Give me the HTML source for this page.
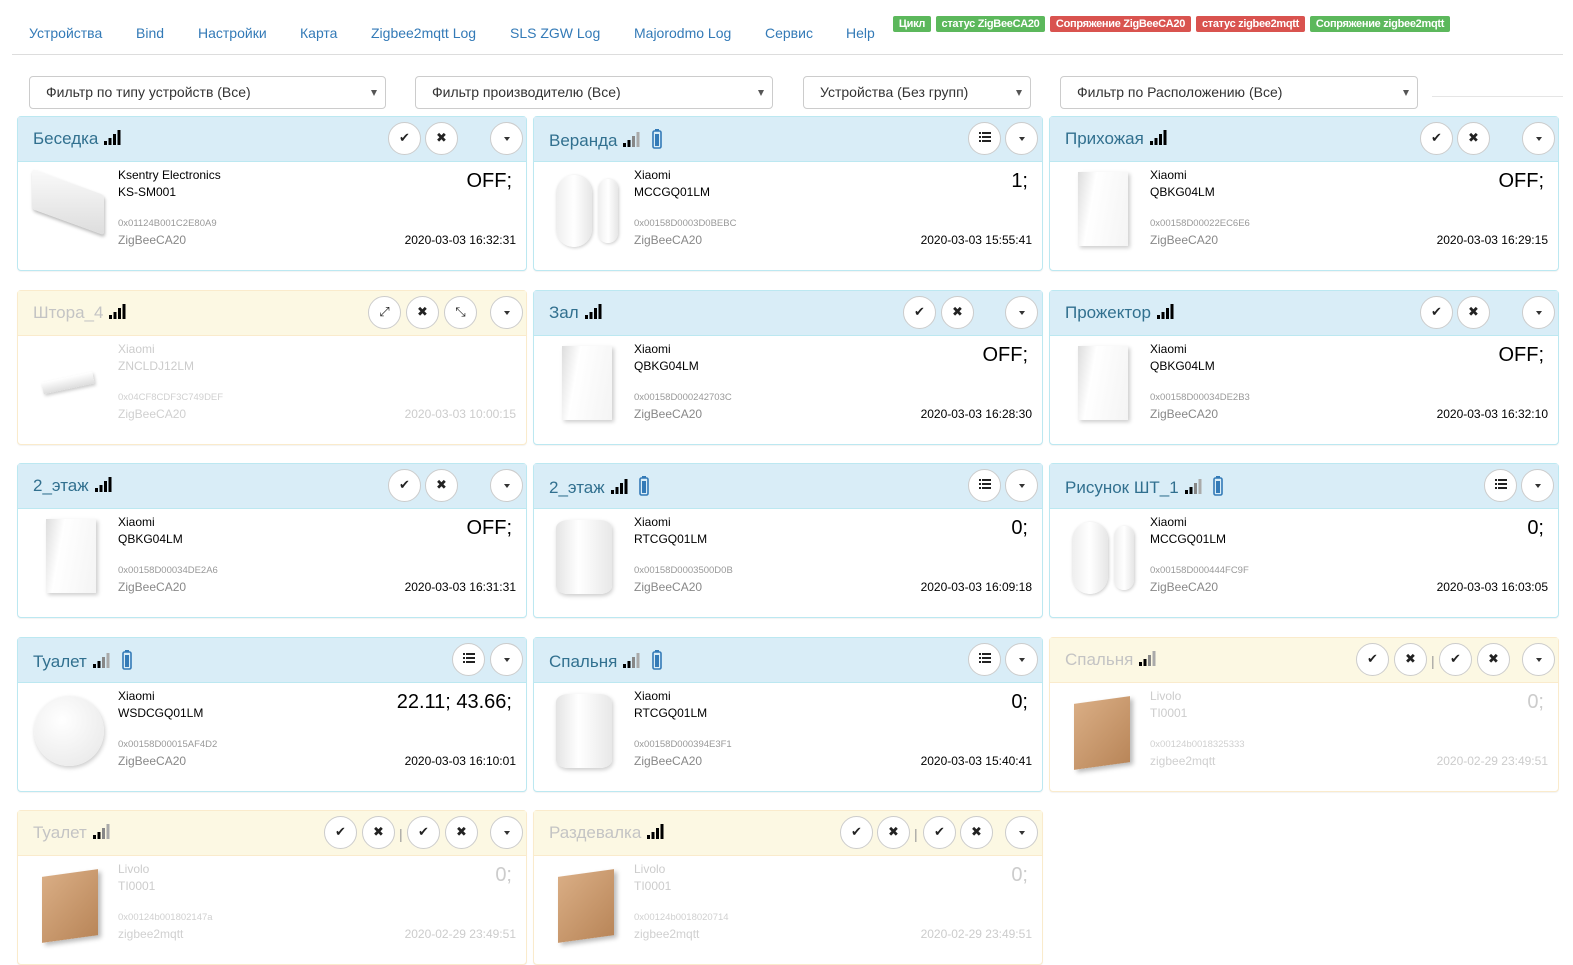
<!DOCTYPE html>
<html><head><meta charset="utf-8"><style>
*{box-sizing:border-box}
body{margin:0;width:1573px;height:957px;background:#fff;font-family:"Liberation Sans",sans-serif;position:relative;overflow:hidden;color:#333}
.nav a{position:absolute;top:25px;font-size:14px;color:#337ab7;text-decoration:none}
.hl{position:absolute;left:12px;top:54px;width:1551px;height:1px;background:#ddd}
.bd{position:absolute;top:16px;height:16px;font-size:11px;font-weight:bold;color:#fff;border-radius:2px;text-align:center;line-height:16px;letter-spacing:-0.3px;white-space:nowrap}
.g{background:#5cb85c}.r{background:#d9534f}
.sel{position:absolute;top:76px;height:33px;border:1px solid #ccc;border-radius:4px;font-size:14px;padding:7px 16px;color:#333}
.sel:after{content:"";position:absolute;right:8px;top:13px;border-left:3px solid transparent;border-right:3px solid transparent;border-top:6px solid #555}
.card{position:absolute;width:510px;height:155px;border:1px solid #bce8f1;border-radius:4px;background:#fff;box-shadow:0 1px 1px rgba(0,0,0,.05)}
.card.y{border-color:#faebcc}
.hd{height:45px;background:#d9edf7;border-bottom:1px solid #bce8f1;position:relative}
.y .hd{background:#fcf8e3;border-bottom-color:#faebcc}
.tt{position:absolute;left:15px;top:12px;font-size:17px;color:#31708f;white-space:nowrap}
.y .tt{color:#c4c4c4}
.tt svg{vertical-align:-1px;margin-left:6px}
.b{position:absolute;top:5px;width:33px;height:33px;border:1px solid #ccc;border-radius:50%;background:#fff;text-align:center;line-height:31px;font-size:13px;color:#222;font-family:"DejaVu Sans",sans-serif}
.b.c:after{content:"";position:absolute;left:13px;top:14px;border-left:3.5px solid transparent;border-right:3.5px solid transparent;border-top:4px solid #333}
.sep{position:absolute;top:15px;font-size:14px;color:#999}
.m{position:absolute;left:100px;font-size:12px;color:#000}
.y .m,.y .v,.y .dt{color:#ccc}
.ad{position:absolute;left:100px;top:101px;font-size:9.5px;color:#999}
.gw{position:absolute;left:100px;top:116px;font-size:12px;color:#888}
.y .ad,.y .gw{color:#d0d0d0}
.v{position:absolute;right:14px;top:53px;font-size:20px;color:#000}
.dt{position:absolute;right:10px;top:116px;font-size:12px;color:#000}
.im{position:absolute}
</style></head><body>
<div class="nav">
<a style="left:29px">Устройства</a><a style="left:136px">Bind</a><a style="left:198px">Настройки</a><a style="left:300px">Карта</a><a style="left:371px">Zigbee2mqtt Log</a><a style="left:510px">SLS ZGW Log</a><a style="left:634px">Majorodmo Log</a><a style="left:765px">Сервис</a><a style="left:846px">Help</a>
</div>
<div class="bd g" style="left:893px;width:38px">Цикл</div>
<div class="bd g" style="left:936px;width:109px">статус ZigBeeCA20</div>
<div class="bd r" style="left:1050px;width:141px">Сопряжение ZigBeeCA20</div>
<div class="bd r" style="left:1196px;width:109px">статус zigbee2mqtt</div>
<div class="bd g" style="left:1310px;width:140px">Сопряжение zigbee2mqtt</div>
<div class="hl"></div>
<div class="sel" style="left:29px;width:357px">Фильтр по типу устройств (Все)</div>
<div class="sel" style="left:415px;width:358px">Фильтр производителю (Все)</div>
<div class="sel" style="left:803px;width:228px">Устройства (Без групп)</div>
<div class="sel" style="left:1060px;width:358px">Фильтр по Расположению (Все)</div>
<div style="position:absolute;left:1432px;top:96px;width:131px;height:1px;background:#e5e5e5"></div>

<svg width="0" height="0" style="position:absolute"><defs>
<symbol id="sig" viewBox="0 0 18 15"><rect x="0" y="11" width="3" height="4" fill="#000"/><rect x="4.5" y="8" width="3" height="7" fill="#000"/><rect x="9" y="4" width="3" height="11" fill="#000"/><rect x="13.5" y="0" width="3" height="15" fill="#000"/></symbol>
<symbol id="sig2" viewBox="0 0 18 15"><rect x="0" y="11" width="3" height="4" fill="#000"/><rect x="4.5" y="8" width="3" height="7" fill="#000"/><rect x="9" y="4" width="3" height="11" fill="#888"/><rect x="13.5" y="0" width="3" height="15" fill="#aaa"/></symbol>
<symbol id="bat" viewBox="0 0 10 20"><rect x="3" y="0" width="4" height="2" fill="#337ab7"/><rect x="1" y="2" width="8" height="17" rx="1.5" fill="none" stroke="#337ab7" stroke-width="1.6"/><rect x="3" y="5" width="4" height="12" fill="#337ab7"/></symbol>
<symbol id="lst" viewBox="0 0 12 12"><g fill="#222"><rect x="0" y="1" width="2" height="2"/><rect x="3" y="1" width="9" height="2"/><rect x="0" y="5" width="2" height="2"/><rect x="3" y="5" width="9" height="2"/><rect x="0" y="9" width="2" height="2"/><rect x="3" y="9" width="9" height="2"/></g></symbol>
</defs></svg>

<!-- Row 1 -->
<div class="card" style="left:17px;top:116px"><div class="hd"><div class="tt">Беседка<svg width="18" height="15"><use href="#sig"/></svg></div>
<div class="b" style="left:370px">✔</div><div class="b" style="left:407px">✖</div><div class="b c" style="left:472px"></div></div>
<div class="im" style="left:14px;top:65px;width:72px;height:40px;background:linear-gradient(160deg,#fafafa,#ddd);transform:skewY(20deg);border-radius:3px;box-shadow:1px 2px 3px #bbb"></div>
<div class="m" style="top:51px">Ksentry Electronics</div><div class="m" style="top:68px">KS-SM001</div><div class="ad">0x01124B001C2E80A9</div><div class="gw">ZigBeeCA20</div><div class="v">OFF;</div><div class="dt">2020-03-03 16:32:31</div></div>

<div class="card" style="left:533px;top:116px"><div class="hd"><div class="tt">Веранда<svg width="18" height="15"><use href="#sig2"/></svg> <svg width="10" height="20" style="vertical-align:-3px"><use href="#bat"/></svg></div>
<div class="b" style="left:434px"><svg width="12" height="12" style="vertical-align:-1px"><use href="#lst"/></svg></div><div class="b c" style="left:471px"></div></div>
<div class="im" style="left:22px;top:58px;width:36px;height:72px;background:linear-gradient(90deg,#eee,#fff,#e6e6e6);border-radius:18px;box-shadow:1px 1px 3px #ccc"></div><div class="im" style="left:64px;top:62px;width:20px;height:64px;background:linear-gradient(90deg,#eee,#fff,#e6e6e6);border-radius:10px;box-shadow:1px 1px 3px #ccc"></div>
<div class="m" style="top:51px">Xiaomi</div><div class="m" style="top:68px">MCCGQ01LM</div><div class="ad">0x00158D0003D0BEBC</div><div class="gw">ZigBeeCA20</div><div class="v">1;</div><div class="dt">2020-03-03 15:55:41</div></div>

<div class="card" style="left:1049px;top:116px"><div class="hd"><div class="tt">Прихожая<svg width="18" height="15"><use href="#sig"/></svg></div>
<div class="b" style="left:370px">✔</div><div class="b" style="left:407px">✖</div><div class="b c" style="left:472px"></div></div>
<div class="im" style="left:28px;top:55px;width:50px;height:74px;background:linear-gradient(100deg,#ddd,#fff 30%,#f4f4f4);box-shadow:2px 2px 4px #ccc"></div>
<div class="m" style="top:51px">Xiaomi</div><div class="m" style="top:68px">QBKG04LM</div><div class="ad">0x00158D00022EC6E6</div><div class="gw">ZigBeeCA20</div><div class="v">OFF;</div><div class="dt">2020-03-03 16:29:15</div></div>

<!-- Row 2 -->
<div class="card y" style="left:17px;top:290px"><div class="hd"><div class="tt">Штора_4<svg width="18" height="15"><use href="#sig"/></svg></div>
<div class="b" style="left:350px">⤢</div><div class="b" style="left:388px">✖</div><div class="b" style="left:426px">⤡</div><div class="b c" style="left:472px"></div></div>
<div class="im" style="left:24px;top:86px;width:52px;height:12px;background:linear-gradient(#fff,#ddd);transform:rotate(-12deg);box-shadow:1px 2px 3px #ccc"></div>
<div class="m" style="top:51px">Xiaomi</div><div class="m" style="top:68px">ZNCLDJ12LM</div><div class="ad">0x04CF8CDF3C749DEF</div><div class="gw">ZigBeeCA20</div><div class="dt">2020-03-03 10:00:15</div></div>

<div class="card" style="left:533px;top:290px"><div class="hd"><div class="tt">Зал<svg width="18" height="15"><use href="#sig"/></svg></div>
<div class="b" style="left:369px">✔</div><div class="b" style="left:407px">✖</div><div class="b c" style="left:471px"></div></div>
<div class="im" style="left:28px;top:55px;width:50px;height:74px;background:linear-gradient(100deg,#ddd,#fff 30%,#f4f4f4);box-shadow:2px 2px 4px #ccc"></div>
<div class="m" style="top:51px">Xiaomi</div><div class="m" style="top:68px">QBKG04LM</div><div class="ad">0x00158D000242703C</div><div class="gw">ZigBeeCA20</div><div class="v">OFF;</div><div class="dt">2020-03-03 16:28:30</div></div>

<div class="card" style="left:1049px;top:290px"><div class="hd"><div class="tt">Прожектор<svg width="18" height="15"><use href="#sig"/></svg></div>
<div class="b" style="left:370px">✔</div><div class="b" style="left:407px">✖</div><div class="b c" style="left:472px"></div></div>
<div class="im" style="left:28px;top:55px;width:50px;height:74px;background:linear-gradient(100deg,#ddd,#fff 30%,#f4f4f4);box-shadow:2px 2px 4px #ccc"></div>
<div class="m" style="top:51px">Xiaomi</div><div class="m" style="top:68px">QBKG04LM</div><div class="ad">0x00158D00034DE2B3</div><div class="gw">ZigBeeCA20</div><div class="v">OFF;</div><div class="dt">2020-03-03 16:32:10</div></div>

<!-- Row 3 -->
<div class="card" style="left:17px;top:463px"><div class="hd"><div class="tt">2_этаж<svg width="18" height="15"><use href="#sig"/></svg></div>
<div class="b" style="left:370px">✔</div><div class="b" style="left:407px">✖</div><div class="b c" style="left:472px"></div></div>
<div class="im" style="left:28px;top:55px;width:50px;height:74px;background:linear-gradient(100deg,#ddd,#fff 30%,#f4f4f4);box-shadow:2px 2px 4px #ccc"></div>
<div class="m" style="top:51px">Xiaomi</div><div class="m" style="top:68px">QBKG04LM</div><div class="ad">0x00158D00034DE2A6</div><div class="gw">ZigBeeCA20</div><div class="v">OFF;</div><div class="dt">2020-03-03 16:31:31</div></div>

<div class="card" style="left:533px;top:463px"><div class="hd"><div class="tt">2_этаж<svg width="18" height="15"><use href="#sig"/></svg> <svg width="10" height="20" style="vertical-align:-3px"><use href="#bat"/></svg></div>
<div class="b" style="left:434px"><svg width="12" height="12" style="vertical-align:-1px"><use href="#lst"/></svg></div><div class="b c" style="left:471px"></div></div>
<div class="im" style="left:22px;top:56px;width:56px;height:74px;background:linear-gradient(90deg,#e4e4e4,#fff 40%,#e8e8e8);border-radius:12px/8px;box-shadow:1px 2px 4px #ccc"></div>
<div class="m" style="top:51px">Xiaomi</div><div class="m" style="top:68px">RTCGQ01LM</div><div class="ad">0x00158D0003500D0B</div><div class="gw">ZigBeeCA20</div><div class="v">0;</div><div class="dt">2020-03-03 16:09:18</div></div>

<div class="card" style="left:1049px;top:463px"><div class="hd"><div class="tt">Рисунок ШТ_1<svg width="18" height="15"><use href="#sig2"/></svg> <svg width="10" height="20" style="vertical-align:-3px"><use href="#bat"/></svg></div>
<div class="b" style="left:434px"><svg width="12" height="12" style="vertical-align:-1px"><use href="#lst"/></svg></div><div class="b c" style="left:471px"></div></div>
<div class="im" style="left:22px;top:58px;width:36px;height:72px;background:linear-gradient(90deg,#eee,#fff,#e6e6e6);border-radius:18px;box-shadow:1px 1px 3px #ccc"></div><div class="im" style="left:64px;top:62px;width:20px;height:64px;background:linear-gradient(90deg,#eee,#fff,#e6e6e6);border-radius:10px;box-shadow:1px 1px 3px #ccc"></div>
<div class="m" style="top:51px">Xiaomi</div><div class="m" style="top:68px">MCCGQ01LM</div><div class="ad">0x00158D000444FC9F</div><div class="gw">ZigBeeCA20</div><div class="v">0;</div><div class="dt">2020-03-03 16:03:05</div></div>

<!-- Row 4 -->
<div class="card" style="left:17px;top:637px"><div class="hd"><div class="tt">Туалет<svg width="18" height="15"><use href="#sig2"/></svg> <svg width="10" height="20" style="vertical-align:-3px"><use href="#bat"/></svg></div>
<div class="b" style="left:434px"><svg width="12" height="12" style="vertical-align:-1px"><use href="#lst"/></svg></div><div class="b c" style="left:472px"></div></div>
<div class="im" style="left:16px;top:58px;width:70px;height:70px;background:radial-gradient(circle at 40% 35%,#fff,#e6e6e6);border-radius:50%;box-shadow:1px 2px 4px #ccc"></div>
<div class="m" style="top:51px">Xiaomi</div><div class="m" style="top:68px">WSDCGQ01LM</div><div class="ad">0x00158D00015AF4D2</div><div class="gw">ZigBeeCA20</div><div class="v">22.11; 43.66;</div><div class="dt">2020-03-03 16:10:01</div></div>

<div class="card" style="left:533px;top:637px"><div class="hd"><div class="tt">Спальня<svg width="18" height="15"><use href="#sig2"/></svg> <svg width="10" height="20" style="vertical-align:-3px"><use href="#bat"/></svg></div>
<div class="b" style="left:434px"><svg width="12" height="12" style="vertical-align:-1px"><use href="#lst"/></svg></div><div class="b c" style="left:471px"></div></div>
<div class="im" style="left:22px;top:56px;width:56px;height:74px;background:linear-gradient(90deg,#e4e4e4,#fff 40%,#e8e8e8);border-radius:12px/8px;box-shadow:1px 2px 4px #ccc"></div>
<div class="m" style="top:51px">Xiaomi</div><div class="m" style="top:68px">RTCGQ01LM</div><div class="ad">0x00158D000394E3F1</div><div class="gw">ZigBeeCA20</div><div class="v">0;</div><div class="dt">2020-03-03 15:40:41</div></div>

<div class="card y" style="left:1049px;top:637px"><div class="hd"><div class="tt">Спальня<svg width="18" height="15"><use href="#sig2"/></svg></div>
<div class="b" style="left:306px">✔</div><div class="b" style="left:344px">✖</div><div class="sep" style="left:381px">|</div><div class="b" style="left:389px">✔</div><div class="b" style="left:427px">✖</div><div class="b c" style="left:472px"></div></div>
<div class="im" style="left:24px;top:62px;width:56px;height:66px;background:linear-gradient(135deg,#d9ad84,#b98659);transform:skewY(-8deg);box-shadow:3px 3px 5px #bbb"></div>
<div class="m" style="top:51px">Livolo</div><div class="m" style="top:68px">TI0001</div><div class="ad">0x00124b0018325333</div><div class="gw">zigbee2mqtt</div><div class="v">0;</div><div class="dt">2020-02-29 23:49:51</div></div>

<!-- Row 5 -->
<div class="card y" style="left:17px;top:810px"><div class="hd"><div class="tt">Туалет<svg width="18" height="15"><use href="#sig2"/></svg></div>
<div class="b" style="left:306px">✔</div><div class="b" style="left:344px">✖</div><div class="sep" style="left:381px">|</div><div class="b" style="left:389px">✔</div><div class="b" style="left:427px">✖</div><div class="b c" style="left:472px"></div></div>
<div class="im" style="left:24px;top:62px;width:56px;height:66px;background:linear-gradient(135deg,#d9ad84,#b98659);transform:skewY(-8deg);box-shadow:3px 3px 5px #bbb"></div>
<div class="m" style="top:51px">Livolo</div><div class="m" style="top:68px">TI0001</div><div class="ad">0x00124b001802147a</div><div class="gw">zigbee2mqtt</div><div class="v">0;</div><div class="dt">2020-02-29 23:49:51</div></div>

<div class="card y" style="left:533px;top:810px"><div class="hd"><div class="tt">Раздевалка<svg width="18" height="15"><use href="#sig"/></svg></div>
<div class="b" style="left:306px">✔</div><div class="b" style="left:343px">✖</div><div class="sep" style="left:380px">|</div><div class="b" style="left:389px">✔</div><div class="b" style="left:426px">✖</div><div class="b c" style="left:471px"></div></div>
<div class="im" style="left:24px;top:62px;width:56px;height:66px;background:linear-gradient(135deg,#d9ad84,#b98659);transform:skewY(-8deg);box-shadow:3px 3px 5px #bbb"></div>
<div class="m" style="top:51px">Livolo</div><div class="m" style="top:68px">TI0001</div><div class="ad">0x00124b0018020714</div><div class="gw">zigbee2mqtt</div><div class="v">0;</div><div class="dt">2020-02-29 23:49:51</div></div>
</body></html>
